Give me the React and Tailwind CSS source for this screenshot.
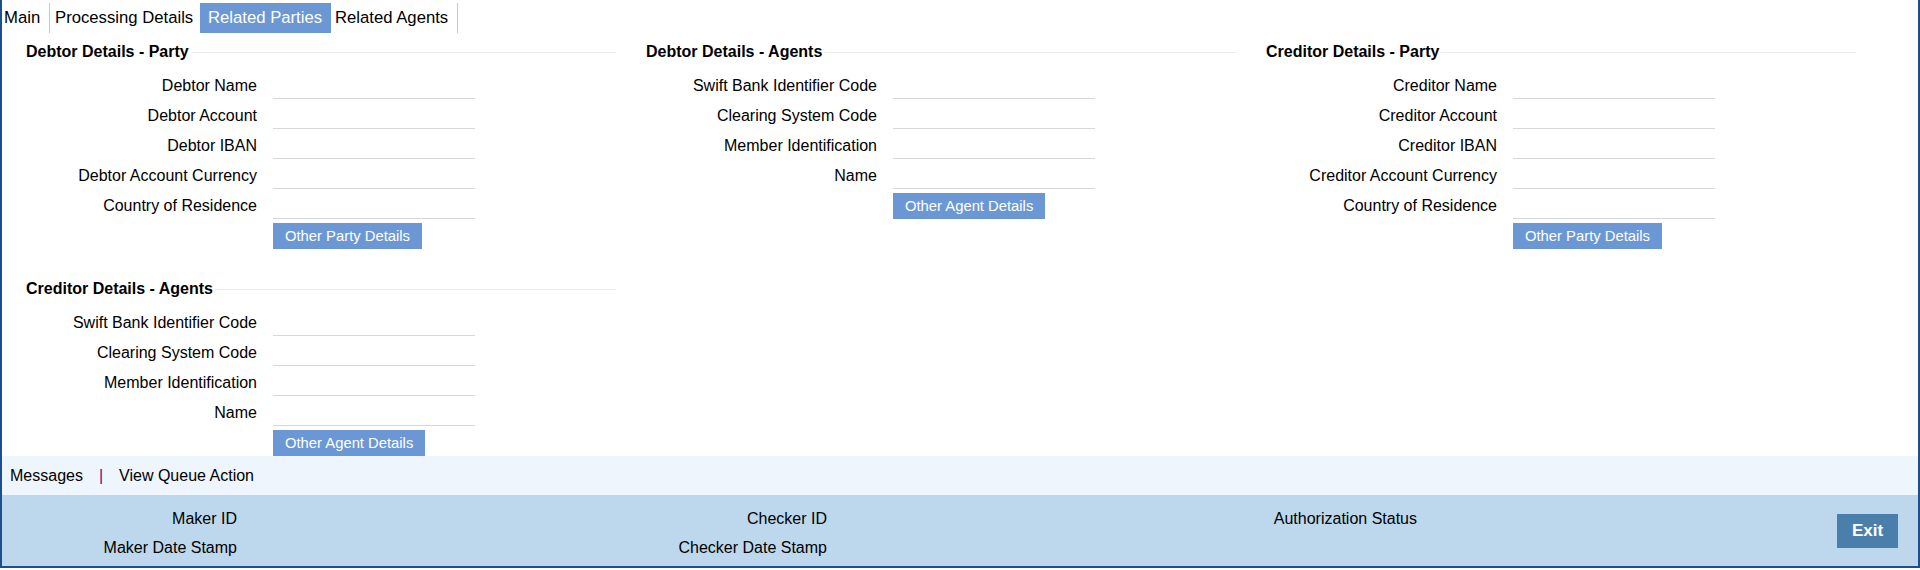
import React from "react";

// tab strip across the top
const tabs = [
  { label: "Main", cls: "w-[48px] pl-[2px] border-r border-[#c8c8c8]" },
  { label: "Processing Details", cls: "w-[150px] pl-[5px]" },
  { label: "Related Parties", cls: "w-[131px] pl-[8px] bg-[#6b98d4] text-white", active: true },
  { label: "Related Agents", cls: "w-[127px] pl-[4px] border-r border-[#c8c8c8]" },
];

function Section({ title, fields, button, className = "" }) {
  return (
    <div className={`w-[590px] ${className}`}>
      <div className="flex h-[24px] items-center gap-[2px]">
        <span className="text-[16px] font-bold leading-[24px] text-black">{title}</span>
        <div className="h-px flex-1 bg-[#ebebeb]" />
      </div>
      <div className="mt-[5px]">
        {fields.map((f) => (
          <div key={f} className="flex h-[30px] items-end">
            <label className="w-[231px] pb-[3px] text-right text-[16px] leading-[20px] text-black">{f}</label>
            <input
              readOnly
              className="ml-[16px] h-[26px] w-[202px] border-0 border-b border-[#d6d6d6] bg-transparent outline-none"
            />
          </div>
        ))}
      </div>
      <button className="ml-[247px] mt-[4px] h-[26px] bg-[#6b98d4] px-[12px] text-[14.8px] leading-[26px] text-white">
        {button}
      </button>
    </div>
  );
}

function FooterBlock({ labels }) {
  return (
    <div className="flex w-[590px] flex-col">
      {labels.map((l) => (
        <div key={l} className="h-[29px] w-[235px] text-right text-[16px] leading-[29px] text-black">
          {l}
        </div>
      ))}
    </div>
  );
}

export default function App() {
  return (
    <div className="flex h-[568px] w-full flex-col overflow-hidden border-x-2 border-b-2 border-[#1f4f8b] bg-white font-['Liberation_Sans',Arial,sans-serif]">
      {/* Main content */}
      <div className="flex-1">
        <div className="flex h-[33px] pt-[3px]">
          {tabs.map((t) => (
            <div key={t.label} className={`h-[30px] text-[16.7px] leading-[30px] ${t.active ? "" : "text-black"} ${t.cls}`}>
              {t.label}
            </div>
          ))}
        </div>

        <div className="mt-[7px] flex gap-[30px] pl-[24px]">
          <div className="flex flex-col">
            <Section
              title="Debtor Details - Party"
              fields={["Debtor Name", "Debtor Account", "Debtor IBAN", "Debtor Account Currency", "Country of Residence"]}
              button="Other Party Details"
            />
            <Section
              className="mt-[28px]"
              title="Creditor Details - Agents"
              fields={["Swift Bank Identifier Code", "Clearing System Code", "Member Identification", "Name"]}
              button="Other Agent Details"
            />
          </div>
          <Section
            title="Debtor Details - Agents"
            fields={["Swift Bank Identifier Code", "Clearing System Code", "Member Identification", "Name"]}
            button="Other Agent Details"
          />
          <Section
            title="Creditor Details - Party"
            fields={["Creditor Name", "Creditor Account", "Creditor IBAN", "Creditor Account Currency", "Country of Residence"]}
            button="Other Party Details"
          />
        </div>
      </div>

      {/* Messages bar */}
      <div className="flex h-[39px] items-center bg-[#eef5fd] pl-[8px] text-[16px] text-black">
        <span>Messages</span>
        <span className="mx-[16px] text-[#4b1d78]">|</span>
        <span>View Queue Action</span>
      </div>

      {/* Audit footer */}
      <div className="flex h-[71px] bg-[#bdd8ed]">
        <div className="flex pt-[9px]">
          <FooterBlock labels={["Maker ID", "Maker Date Stamp"]} />
          <FooterBlock labels={["Checker ID", "Checker Date Stamp"]} />
          <FooterBlock labels={["Authorization Status"]} />
        </div>
        <button className="ml-auto mr-[20px] h-[34px] w-[61px] self-center bg-[#4a7fac] text-[17px] font-bold text-white">
          Exit
        </button>
      </div>
    </div>
  );
}
